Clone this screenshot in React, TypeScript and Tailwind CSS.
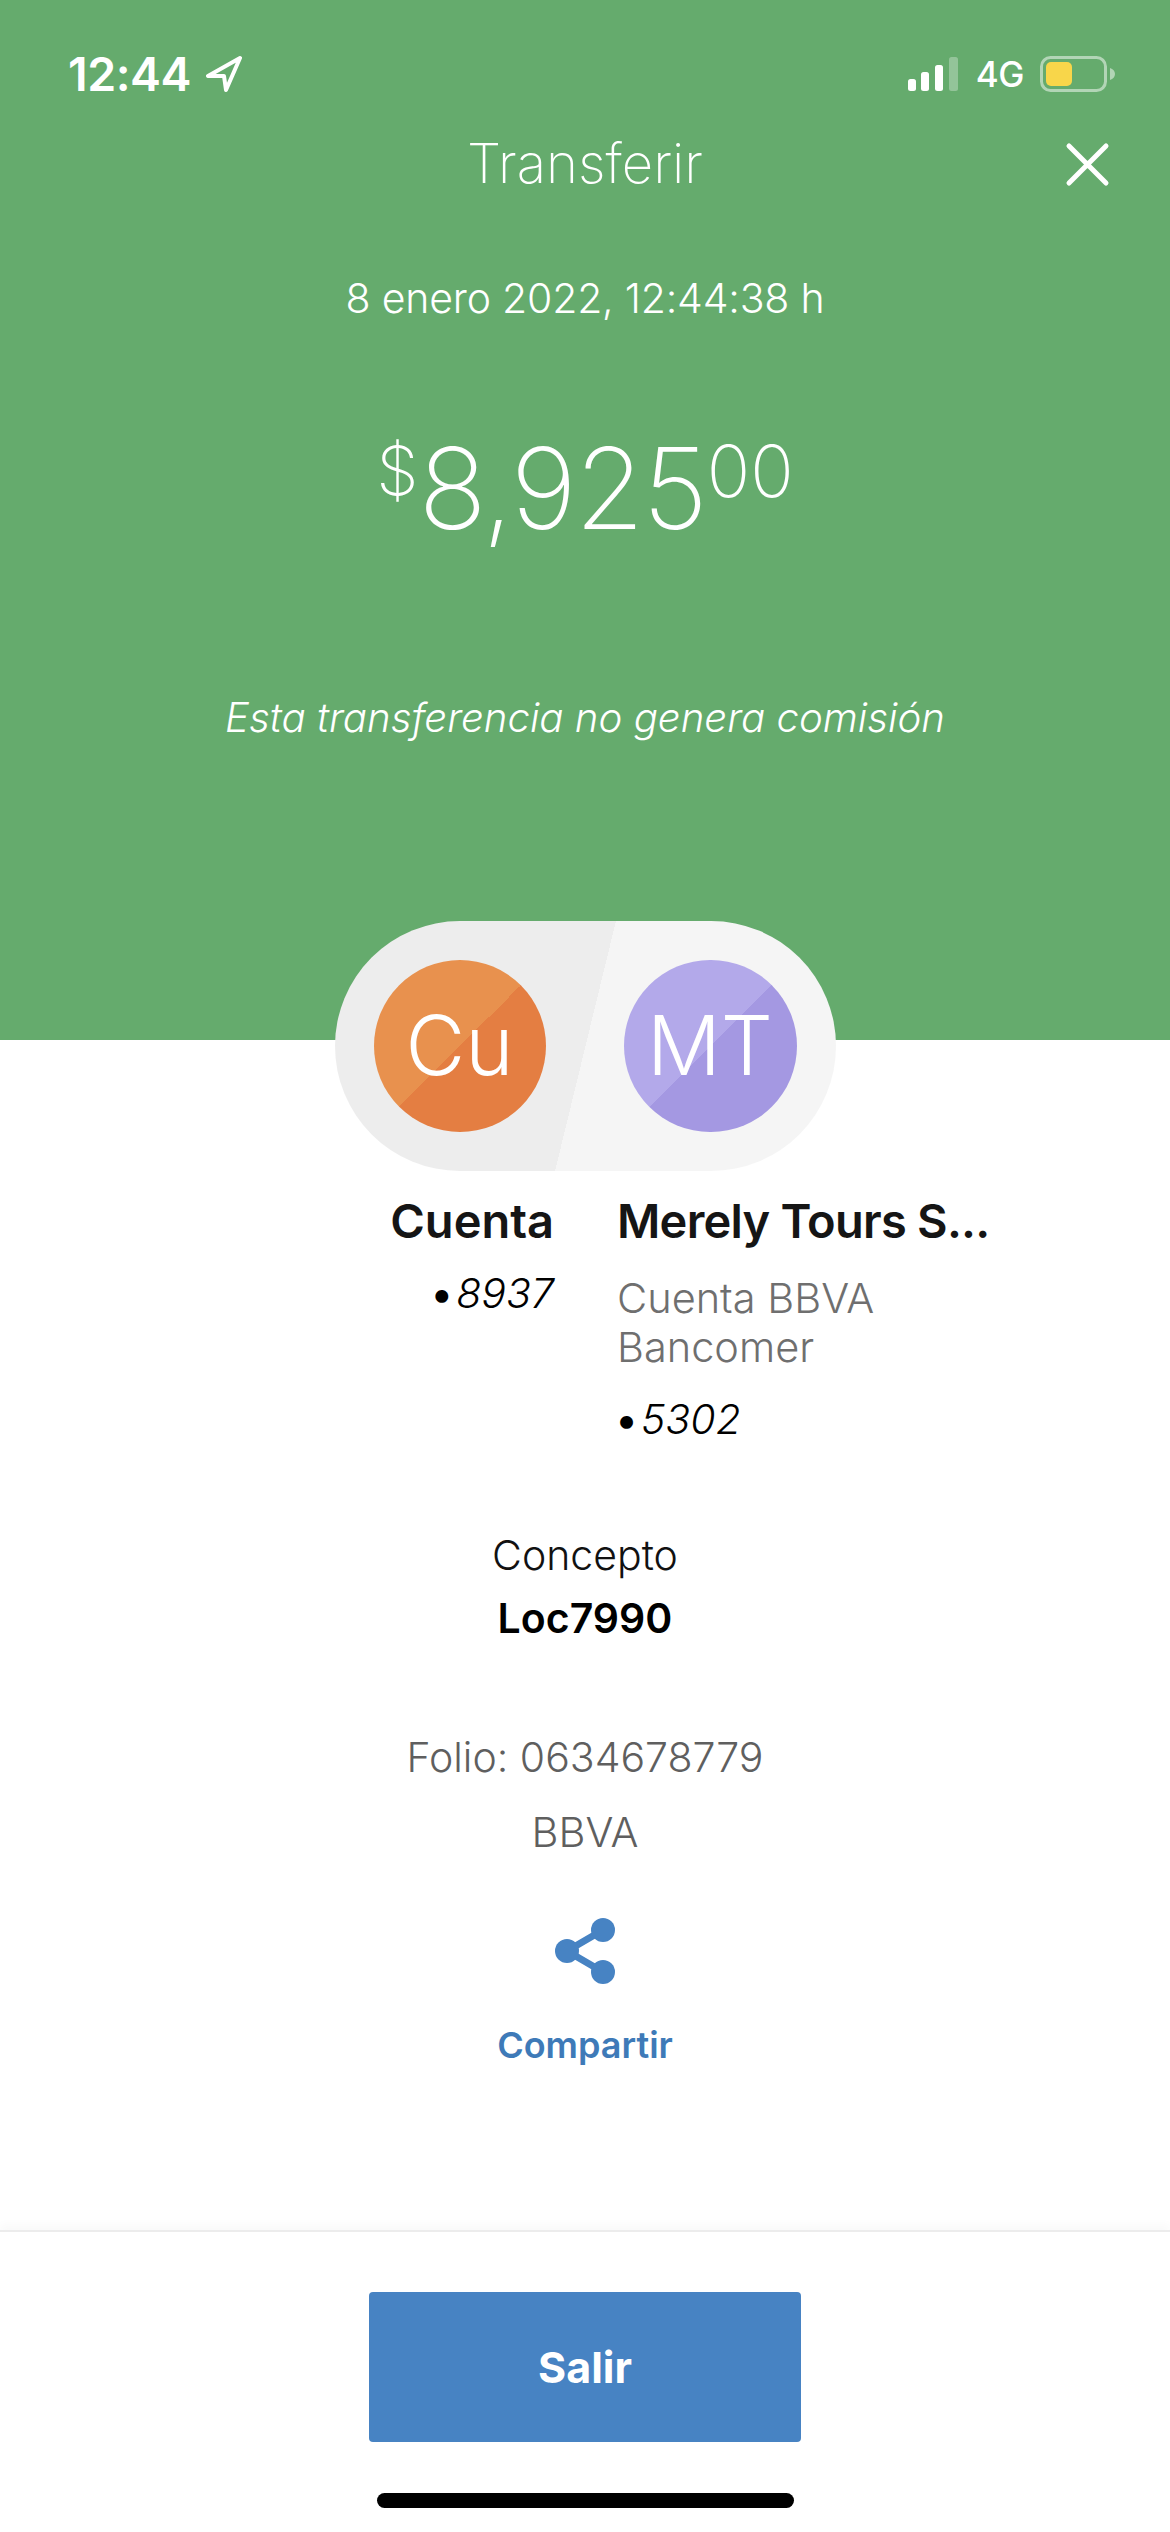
export default function App() {
  return (
    <div className="w-[1170px] h-[2532px] bg-white flex flex-col font-['Inter',sans-serif]">
      <div className="h-[1040px] bg-[#65ab6d] text-white flex flex-col shrink-0">
        <div className="h-[90px] pt-[58px] px-[68px] pr-[55px] flex items-center justify-between">
          <div className="flex items-center gap-[14px]">
            <span className="font-semibold text-[46.5px] leading-[52px] tracking-[-0.5px]">12:44</span>
            <svg width="37" height="36" viewBox="0 0 37 36" fill="none">
              <path d="M35 2 L3 20 L19 20 L21 34 Z" stroke="white" strokeWidth="4" strokeLinejoin="round" />
            </svg>
          </div>
          <div className="flex items-center">
            <svg width="50" height="34" viewBox="0 0 50 34">
              <rect x="0" y="22" width="8" height="12" rx="2.5" fill="white" />
              <rect x="13" y="15" width="8" height="19" rx="2.5" fill="white" />
              <rect x="27" y="8" width="8" height="26" rx="2.5" fill="white" />
              <rect x="41" y="0" width="9" height="34" rx="2.5" fill="white" fillOpacity="0.3" />
            </svg>
            <span className="ml-[18px] font-medium text-[35px] leading-[40px] tracking-[-0.5px]">4G</span>
            <svg className="ml-[16px]" width="75" height="36" viewBox="0 0 75 36">
              <rect x="1.5" y="1.5" width="64" height="33" rx="9" fill="none" stroke="white" strokeOpacity="0.5" strokeWidth="3" />
              <rect x="6" y="6" width="26" height="24" rx="5" fill="#f8d64a" />
              <path d="M70 12 C73 13 75 15 75 18 C75 21 73 23 70 24 Z" fill="white" fillOpacity="0.5" />
            </svg>
          </div>
        </div>
        <div className="relative h-[60px] mt-[43px] flex items-center justify-center">
          <span className="font-extralight text-[54.5px] leading-[60px]">Transferir</span>
          <svg className="absolute left-[1065px] top-[9px]" width="45" height="45" viewBox="0 0 45 45">
            <path d="M4 4 L41 41 M41 4 L4 41" stroke="white" strokeWidth="5" strokeLinecap="round" />
          </svg>
        </div>
        <p className="mt-[80px] text-center font-light text-[41px] leading-[50px] tracking-[-0.2px]">8 enero 2022, 12:44:38 h</p>
        <div className="mt-[100px] h-[130px] flex items-start justify-center">
          <span className="font-extralight text-[68px] leading-[80px] mt-[7px]">$</span>
          <span className="font-extralight text-[113px] leading-[130px] tracking-[-2px]">8,925</span>
          <span className="font-extralight text-[72px] leading-[80px] mt-[8px] ml-[1px]">00</span>
        </div>
        <p className="mt-[140px] text-center italic font-light text-[40.2px] leading-[50px]">Esta transferencia no genera comisión</p>
      </div>

      <div className="flex justify-center -mt-[119px] relative">
        <div className="w-[501px] h-[250px] rounded-[125px] bg-[linear-gradient(103.7deg,#ededed_50%,#f5f5f5_50%)] flex items-center justify-between pl-[39px] pr-[39px]">
          <div className="w-[172px] h-[172px] rounded-full bg-[linear-gradient(135deg,#e8914e_50%,#e47e42_50%)] flex items-center justify-center text-white font-light text-[82px] leading-none">Cu</div>
          <div className="w-[173px] h-[172px] rounded-full bg-[linear-gradient(135deg,#b3a9ea_50%,#a498e2_50%)] flex items-center justify-center text-white font-light text-[82px] leading-none">MT</div>
        </div>
      </div>

      <div className="flex mt-[20px] h-[262px]">
        <div className="w-[554px] text-right shrink-0">
          <p className="font-semibold text-[47px] leading-[60px] text-[#151515]">Cuenta</p>
          <p className="mt-[17px] italic font-light text-[41px] leading-[50px] text-black"><span className="not-italic font-normal mr-[3px]">•</span>8937</p>
        </div>
        <div className="ml-[63px]">
          <p className="font-semibold text-[47px] leading-[60px] tracking-[-0.75px] text-[#151515]">Merely Tours S...</p>
          <p className="mt-[23px] font-light text-[41.5px] leading-[49px] text-[#6f6f6f]">Cuenta BBVA<br />Bancomer</p>
          <p className="mt-[22px] -ml-[2px] italic font-light text-[41px] leading-[50px] text-black"><span className="not-italic font-normal mr-[3px]">•</span>5302</p>
        </div>
      </div>

      <div className="mt-[72px] flex flex-col items-center">
        <p className="text-[41px] leading-[60px] font-light text-[#111]">Concepto</p>
        <p className="mt-[3px] text-[41px] leading-[60px] font-semibold text-black">Loc7990</p>
        <p className="mt-[84px] text-[41px] leading-[50px] font-light text-[#5f5f5f]">Folio: 0634678779</p>
        <p className="mt-[25px] text-[41.5px] leading-[50px] font-light text-[#5f5f5f]">BBVA</p>
        <svg className="mt-[61px]" width="60" height="66" viewBox="0 0 60 66">
          <path d="M48 12 L12 33 L48 54" fill="none" stroke="#4783c3" strokeWidth="7" />
          <circle cx="48" cy="12" r="12" fill="#4783c3" />
          <circle cx="12" cy="33" r="12" fill="#4783c3" />
          <circle cx="48" cy="54" r="12" fill="#4783c3" />
        </svg>
        <p className="mt-[39px] text-[36px] leading-[44px] font-semibold text-[#3e7ab8]">Compartir</p>
      </div>

      <div className="mt-auto h-[302px] shrink-0 border-t-[2px] border-[#ececec] shadow-[0_-6px_8px_rgba(0,0,0,0.025)] flex flex-col items-center">
        <button className="mt-[60px] w-[432px] h-[150px] rounded-[4px] bg-[#4783c3] text-white font-bold text-[43px]">Salir</button>
        <div className="mt-[51px] w-[417px] h-[15px] rounded-full bg-black" />
      </div>
    </div>
  );
}
